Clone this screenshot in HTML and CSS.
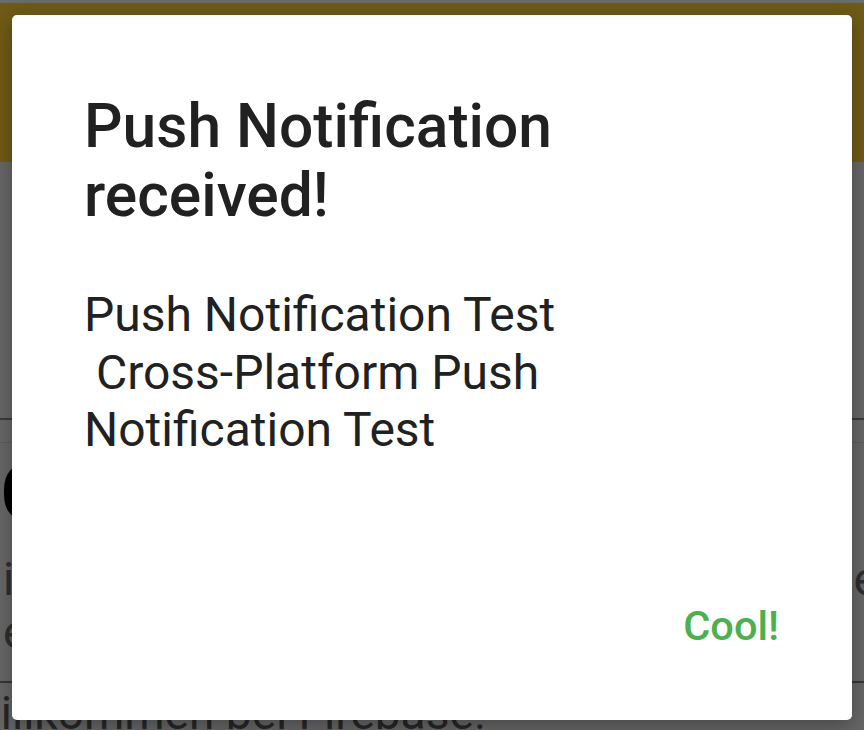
FILE: index.html
```html
<!DOCTYPE html>
<html lang="de">
<head>
<meta charset="utf-8">
<title>Push Notification</title>
<link rel="stylesheet" href="styles.css">
</head>
<body>
<div class="app">
  <div class="statusbar"></div>
  <div class="appbar"></div>
  <div class="blank"></div>
  <div class="tabs"></div>
  <h1 class="heading">Cloud</h1>
  <div class="para">
    <div class="pline"><span>in dieser App</span><span class="tail">Firebase Cloud Message</span></div>
    <div class="pline"><span>empfangen</span></div>
  </div>
  <div class="welcome">Willkommen bei Firebase!</div>
</div>

<div class="dialog" role="dialog">
  <h2 class="title">Push Notification received!</h2>
  <p class="message">Push Notification Test<br>&nbsp;Cross-Platform Push<br>Notification Test</p>
  <div class="actions"><button class="btn">Cool!</button></div>
</div>
</body>
</html>
```

FILE: styles.css
```css
html, body {
  margin: 0;
  padding: 0;
}
body {
  width: 864px;
  height: 730px;
  overflow: hidden;
  position: relative;
  background: #666666;
  font-family: Roboto, "Liberation Sans", sans-serif;
}
.app {
  display: flex;
  flex-direction: column;
}
.statusbar {
  height: 3px;
  background: #6b6b6b;
}
.appbar {
  height: 159px;
  background: #6f5a16;
}
.blank {
  height: 256px;
  border-bottom: 2px solid #3a3a3a;
}
.tabs {
  height: 22px;
  border-bottom: 1px solid #5d5d5d;
}
.heading {
  margin: 0;
  height: 100px;
  font-size: 80px;
  line-height: 100px;
  font-weight: 500;
  color: #000;
  white-space: nowrap;
  padding-left: 0;
}
.para {
  height: 140px;
  border-bottom: 2px solid #353535;
  color: #2e2e2e;
  font-size: 46px;
  line-height: 53px;
  padding-top: 10px;
  box-sizing: border-box;
}
.pline {
  display: flex;
  justify-content: space-between;
  white-space: nowrap;
  padding-left: 3px;
}
.tail {
  margin-right: -14px;
}
.welcome {
  font-size: 46px;
  line-height: 56px;
  color: #262626;
  white-space: nowrap;
  text-indent: -40px;
  padding-top: 2px;
}
.dialog {
  position: absolute;
  left: 12px;
  top: 15px;
  width: 840px;
  height: 705px;
  box-sizing: border-box;
  background: #ffffff;
  border-radius: 5px;
  box-shadow: 0 6px 20px rgba(0, 0, 0, 0.3);
  padding: 77px 73px 70px 72px;
  display: flex;
  flex-direction: column;
}
.title {
  margin: 0;
  font-size: 60.5px;
  line-height: 69px;
  font-weight: 500;
  color: #212121;
}
.message {
  margin: 56px 0 0 0;
  font-size: 48px;
  line-height: 57.5px;
  color: #212121;
  font-weight: 400;
}
.actions {
  margin-top: auto;
  display: flex;
  justify-content: flex-end;
}
.btn {
  border: 0;
  background: transparent;
  padding: 0;
  font-family: Roboto, "Liberation Sans", sans-serif;
  font-size: 41.5px;
  line-height: 48px;
  font-weight: 500;
  color: #4caf50;
}
```
